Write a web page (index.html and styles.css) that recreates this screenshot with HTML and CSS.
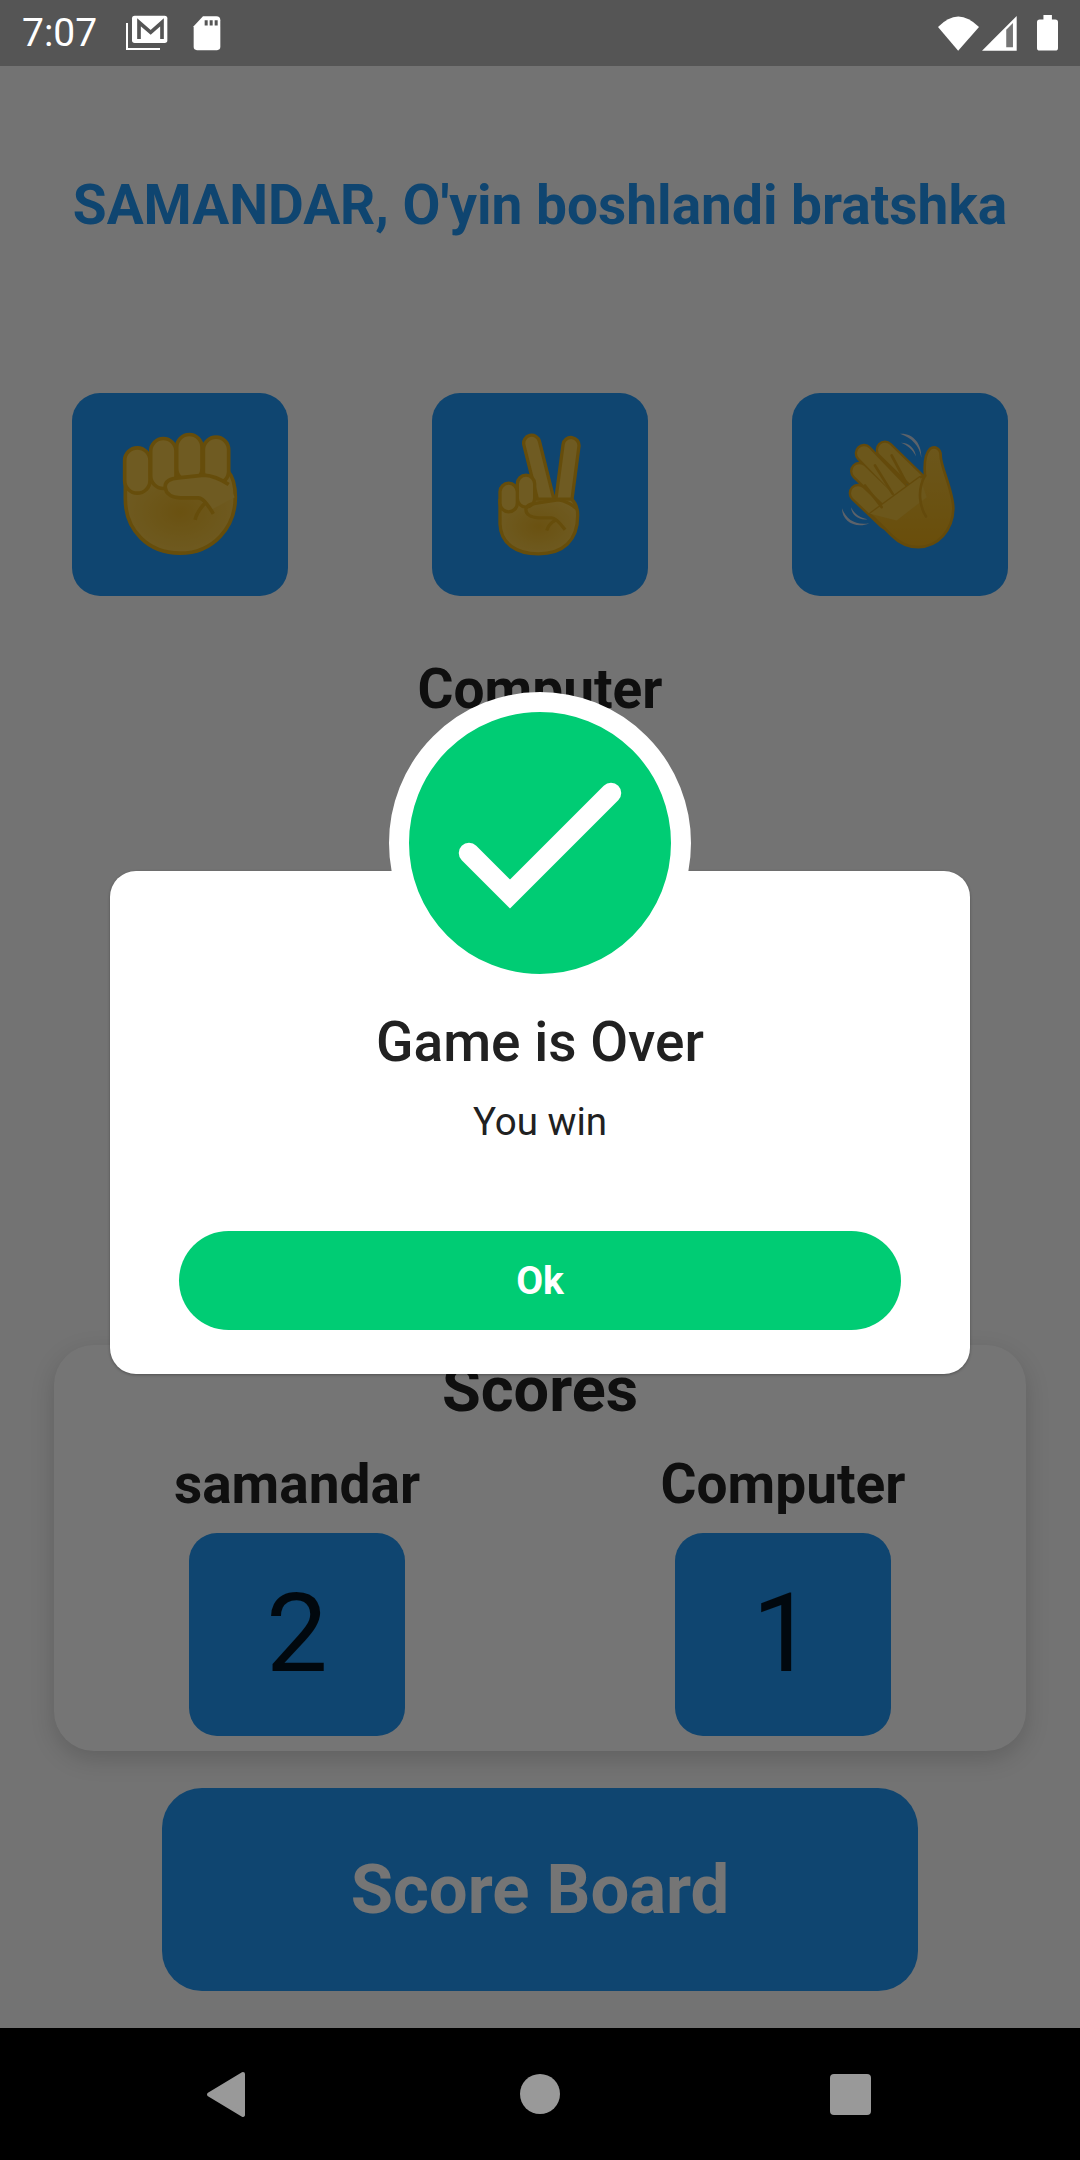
FILE: index.html

```html
<!DOCTYPE html>
<html lang="en">
<head>
    <meta charset="UTF-8">
    <meta name="viewport" content="width=device-width, initial-scale=1.0">
    <title>Game</title>
    <link rel="stylesheet" href="styles.css">
</head>
<body>

    <div class="status">
        <span class="time">7:07</span>
        <svg class="ic-mail" width="42" height="36" viewBox="378 46 126 108">
            <path d="M381 70V148H480" fill="none" stroke="#fff" stroke-width="6"/>
            <rect x="396" y="48" width="106" height="82" rx="8" fill="#fff"/>
            <path d="M417 118V68L452 98L486 68V118" fill="none" stroke="#555" stroke-width="11"/>
        </svg>
        <svg class="ic-sd" width="28" height="35" viewBox="580 48 84 104">
            <path d="M610 48H650a12 12 0 0 1 12 12V140a10 10 0 0 1-10 10H592a10 10 0 0 1-10-10V78Z" fill="#fff"/>
            <path d="M615 60h9v16h-9zM630 60h9v16h-9zM645 60h9v16h-9z" fill="#555"/>
        </svg>
        <span class="spacer"></span>
        <svg class="ic-wifi" width="41" height="35" viewBox="55 45 122 104">
            <path d="M55 78Q115 15 177 78L115 148Z" fill="#fff"/>
        </svg>
        <svg class="ic-signal" width="35" height="35" viewBox="187 45 104 104">
            <path d="M187 148L290 45V148Z" fill="#fff"/>
            <path d="M259 138V86L279 66V138Z" fill="#757575"/>
        </svg>
        <svg class="ic-batt" width="21" height="36" viewBox="351 45 62 106">
            <path d="M370 45h25v13h10a8 8 0 0 1 8 8v76a8 8 0 0 1-8 8h-46a8 8 0 0 1-8-8V66a8 8 0 0 1 8-8h11Z" fill="#fff"/>
        </svg>
    </div>

    <div class="app">
        <h1 class="title">SAMANDAR, O'yin boshlandi bratshka</h1>

        <div class="choices">
            <div class="tile">
                <!-- fist -->
                <svg class="hand" viewBox="-84 -21 648 606">
                    <g stroke="#dfa818" stroke-width="11" fill="#f1c64a">
                        <path fill="url(#palm)" d="M76 240V295C76 390 145 458 240 458C340 458 406 380 406 290C406 255 398 228 384 212Z"/>
                        <rect x="74" y="142" width="76" height="136" rx="38"/>
                        <rect x="152" y="114" width="76" height="150" rx="38"/>
                        <rect x="230" y="102" width="76" height="140" rx="38"/>
                        <rect x="310" y="110" width="76" height="140" rx="38"/>
                        <path d="M196 262C192 240 215 234 235 232L312 224C340 226 368 240 386 252L404 290L330 330L290 290L240 292C215 290 198 280 196 262Z" stroke="none"/>
                        <path d="M386 252C368 240 340 226 312 224L235 232C215 234 192 240 196 262C198 280 215 290 240 292L295 292C312 294 328 320 340 340M285 358C290 335 305 318 318 305" fill="none"/>
                    </g>
                </svg>
            </div>
            <div class="tile">
                <!-- victory -->
                <svg class="hand" viewBox="-84 -21 648 606">
                    <g fill="none" stroke-linecap="round">
                        <path d="M215 128L258 300M333 135L310 310" stroke="#dfa818" stroke-width="58"/>
                        <path d="M215 128L258 300M333 135L310 310" stroke="#f1c64a" stroke-width="38"/>
                    </g>
                    <g stroke="#dfa818" stroke-width="10" fill="#f1c64a">
                        <path fill="url(#palm)" d="M120 300V370C122 430 170 460 235 460C310 460 353 420 353 345C353 320 345 305 335 296L225 296Z"/>
                        <rect x="172" y="224" width="52" height="96" rx="26"/>
                        <rect x="120" y="248" width="52" height="86" rx="26"/>
                        <path d="M350 325C340 315 315 300 295 298L250 305C225 308 200 310 198 325C196 345 215 350 235 352L275 352C290 352 305 375 315 388M260 390C265 375 275 365 285 360" fill="none"/>
                    </g>
                </svg>
            </div>
            <div class="tile">
                <!-- waving hand -->
                <svg class="hand" viewBox="-84 -51 648 606">
                    <g fill="#c8d6e6">
                        <path d="M240 70C280 68 305 100 304 142C298 105 275 82 240 70Z"/>
                        <path d="M243 97C268 97 285 115 288 138C278 118 263 105 243 97Z"/>
                        <path d="M66 293C66 335 110 355 148 338C110 345 80 330 66 293Z"/>
                        <path d="M93 290C95 315 118 330 142 326C120 322 103 310 93 290Z"/>
                    </g>
                    <g fill="none" stroke-linecap="round">
                        <path d="M195 118L300 220M132 128L240 240M118 182L220 280M114 248L200 330" stroke="#d9a21a" stroke-width="56"/>
                        <path d="M195 118L300 220M132 128L240 240M118 182L220 280M114 248L200 330" stroke="#ebbd3c" stroke-width="42"/>
                    </g>
                    <path d="M300 200L315 195C312 160 315 130 330 115C345 105 362 115 362 135C360 165 400 240 400 295C398 360 355 408 295 410C260 410 235 395 215 375L150 310Z" fill="url(#wave)" stroke="#d9a21a" stroke-width="8"/>
                    <path d="M300 200L150 310L230 330L320 260Z" fill="#ebbd3c"/>
                    <path d="M215 135L255 210M165 165L218 250M135 225L185 290M315 195C290 240 300 290 318 318" fill="none" stroke="#d9a21a" stroke-width="8" stroke-linecap="round"/>
                </svg>
            </div>
        </div>

        <h2 class="heading who">Computer</h2>

        <div class="scores">
            <h2 class="heading scores-title">Scores</h2>
            <div class="score-row">
                <div class="score-col">
                    <h3 class="heading">samandar</h3>
                    <div class="tile num">2</div>
                </div>
                <div class="score-col">
                    <h3 class="heading">Computer</h3>
                    <div class="tile num">1</div>
                </div>
            </div>
        </div>

        <div class="board-btn">Score Board</div>

        <svg width="0" height="0" class="defs">
            <defs>
                <radialGradient id="palm" cx="50%" cy="50%" r="55%">
                    <stop offset="0" stop-color="#e8b226"/>
                    <stop offset="1" stop-color="#f1c64a"/>
                </radialGradient>
                <linearGradient id="wave" x1="0" y1="0" x2="0" y2="1">
                    <stop offset="0" stop-color="#ebbd3c"/>
                    <stop offset="1" stop-color="#e6aa18"/>
                </linearGradient>
            </defs>
        </svg>

        <!-- dialog on top of everything -->
        <div class="scrim"></div>
        <div class="dialog">
            <div class="badge">
                <svg width="262" height="262" viewBox="0 0 262 262">
                    <path d="M60 141L101 182L202 81" fill="none" stroke="#fff" stroke-width="20.5" stroke-linecap="round"/>
                </svg>
            </div>
            <div class="dialog-title">Game is Over</div>
            <div class="dialog-text">You win</div>
            <div class="ok-btn">Ok</div>
        </div>
    </div>

    <div class="navbar">
        <svg width="40" height="47" viewBox="0 0 40 47">
            <path d="M37 3L3 23.5L37 44Z" fill="#999" stroke="#999" stroke-width="4" stroke-linejoin="round"/>
        </svg>
        <div class="nav-home"></div>
        <div class="nav-square"></div>
    </div>

</body>
</html>
```

FILE: styles.css

```css
*{
    box-sizing: border-box;
}
body{
    margin: 0;
    width: 1080px;
    height: 2160px;
    display: flex;
    flex-direction: column;
    font-family: Roboto, sans-serif;
    overflow: hidden;
    background: #000;
}

/* status bar */
.status{
    height: 66px;
    background: #555;
    display: flex;
    align-items: center;
    padding: 0 22px 0 22px;
    color: #fff;
}
.time{
    font-size: 39px;
    width: 104px;
}
.ic-sd{
    margin-left: 25px;
}
.spacer{
    flex: 1;
}
.ic-signal{
    margin-left: 3px;
}
.ic-batt{
    margin-left: 20px;
}

/* main screen */
.app{
    position: relative;
    flex: 1;
    background: #fafafa;
    padding-top: 109px;
}
.title{
    margin: 0;
    font-size: 55px;
    line-height: 60px;
    font-weight: 700;
    text-align: center;
    color: #2196f3;
}
.choices{
    display: flex;
    justify-content: space-between;
    padding: 0 72px;
    margin-top: 158px;
}
.tile{
    width: 216px;
    height: 203px;
    border-radius: 28px;
    background: #2196f3;
    display: flex;
    align-items: center;
    justify-content: center;
}
.hand{
    width: 216px;
    height: 203px;
}
.heading{
    margin: 0;
    font-size: 55px;
    line-height: 62px;
    font-weight: 700;
    text-align: center;
    color: #212121;
}
.who{
    margin-top: 62px;
}
.scores{
    width: 972px;
    height: 406px;
    margin: 625px auto 0;
    padding-top: 14px;
    background: #fff;
    border-radius: 40px;
    box-shadow: 0 8px 24px rgba(0,0,0,0.16);
}
.scores-title{
    font-size: 63px;
}
.score-row{
    display: flex;
    justify-content: space-between;
    padding: 0 135px;
    margin-top: 32px;
}
.score-col{
    width: 216px;
    display: flex;
    flex-direction: column;
    align-items: center;
}
.score-col .heading{
    white-space: nowrap;
}
.num{
    margin-top: 18px;
    padding-bottom: 3px;
    font-size: 110px;
    color: rgba(0,0,0,0.87);
}
.board-btn{
    width: 756px;
    height: 203px;
    margin: 37px auto 0;
    border-radius: 40px;
    background: #2196f3;
    color: #fff;
    font-size: 68.8px;
    font-weight: 700;
    display: flex;
    align-items: center;
    justify-content: center;
}
.defs{
    position: absolute;
}

/* dialog */
.scrim{
    position: absolute;
    top: 0;
    left: 0;
    right: 0;
    bottom: 0;
    background: rgba(0,0,0,0.54);
}
.dialog{
    position: absolute;
    left: 110px;
    top: 805px;
    width: 860px;
    height: 503px;
    background: #fff;
    border-radius: 26px;
    box-shadow: 0 1px 3px rgba(0,0,0,0.3);
    padding: 0 69px;
    display: flex;
    flex-direction: column;
    align-items: center;
}
.badge{
    position: absolute;
    left: 279px;
    top: -179px;
    width: 302px;
    height: 302px;
    border-radius: 50%;
    border: 20px solid #fff;
    background: #00cc74;
}
.badge svg{
    display: block;
}
.dialog-title{
    margin-top: 140px;
    font-size: 55px;
    line-height: 62px;
    font-weight: 500;
    color: #212121;
}
.dialog-text{
    margin-top: 27px;
    font-size: 38.5px;
    line-height: 44px;
    color: #212121;
}
.ok-btn{
    width: 100%;
    height: 99px;
    margin-top: 87px;
    border-radius: 50px;
    background: #00cc74;
    color: #fff;
    font-size: 39px;
    font-weight: 700;
    display: flex;
    align-items: center;
    justify-content: center;
}

/* nav bar */
.navbar{
    height: 132px;
    background: #000;
    position: relative;
    display: flex;
    align-items: center;
    padding: 0 209px 0 206px;
    justify-content: space-between;
}
.nav-home{
    width: 40px;
    height: 40px;
    margin-left: 4px;
    border-radius: 50%;
    background: #999;
}
.nav-square{
    width: 41px;
    height: 41px;
    border-radius: 4px;
    background: #999;
}
```
